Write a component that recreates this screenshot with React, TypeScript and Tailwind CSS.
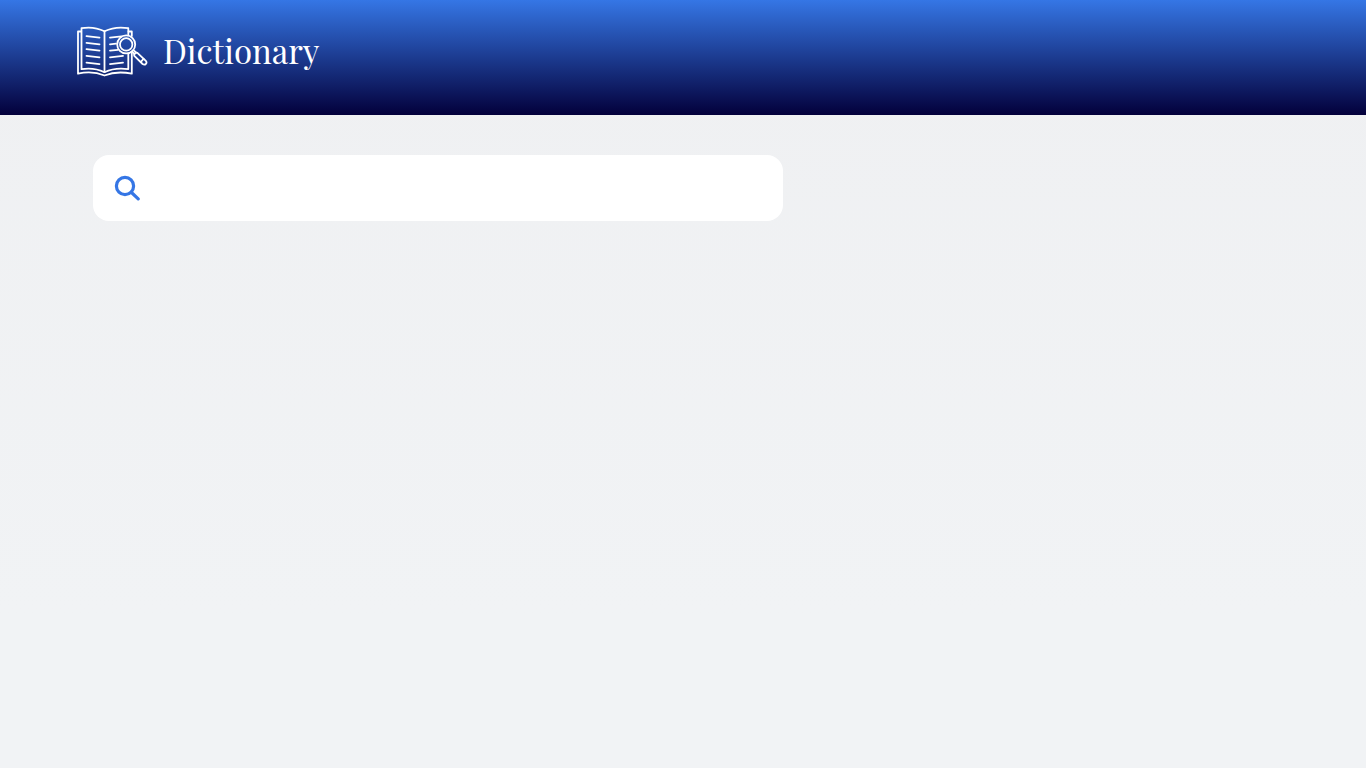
import { useState } from "react";

function BookLogo() {
  return (
    <svg
      aria-hidden="true"
      viewBox="76 26 72 51"
      className="h-[51px] w-[72px] shrink-0"
      fill="none"
      stroke="white"
      strokeWidth="1.8"
      strokeLinecap="round"
      strokeLinejoin="round"
    >
      <path d="M104.5 31.3C97 27.6 89.5 26.8 81.5 28.2V69.2C89.5 67.9 97 68.7 104.5 72.2C112 68.7 119.5 67.9 128.3 69.2V54M104.5 31.3C112 27.6 119.5 26.8 128.3 28.2V34.5" />
      <path d="M104.5 31.3V72.2" />
      <path d="M81 31.5H78V73.7C87 71.7 96 72 104.5 75.5C113 72 122 71.7 131.8 73.7V53M128.5 31.5H131.8V36" />
      <path d="M86.5 36.2L99.5 37.7M86.5 42.8L99.5 44.3M86.5 49.2L99.5 50.7M86.5 55.9L99.5 57.4M86.5 62.6L99.5 64.1" />
      <path d="M110 37.7L121.5 36.4M110 44.3L116 43.6M110 50.7L118 49.8M110 57.4L123 55.9M110 64.1L123 62.6" />
      <circle cx="126.2" cy="44.4" r="9" />
      <circle cx="126.2" cy="44.4" r="6.2" />
      <path d="M132 51.5L134.5 54.2M133.5 50.2L136.3 52.7" />
      <path d="M134.3 55.8C133.6 54.2 135.6 52 137.4 52.8L145.6 60.6C147.8 62.8 145.2 65.8 142.6 64Z" />
      <path d="M140.8 61.8L143.6 58.9" />
    </svg>
  );
}

function SearchIcon() {
  return (
    <svg
      aria-hidden="true"
      viewBox="0 0 26 26"
      className="size-[26px] shrink-0"
      fill="none"
      stroke="#3576e5"
      strokeWidth="3.2"
      strokeLinecap="round"
    >
      <circle cx="11" cy="11" r="8.6" />
      <path d="M17.5 17.5L24.2 23.9" />
    </svg>
  );
}

export default function App() {
  const [word, setWord] = useState("");

  return (
    <div className="min-h-screen bg-linear-to-b/srgb from-[#eff0f2] to-[#f1f3f5] to-80%">
      <header className="flex h-[115px] items-start bg-linear-to-b/srgb from-[#3576e5] to-[#03003b] px-[76px] pt-[26px]">
        <a href="#" className="flex items-start gap-[15px] text-white">
          <BookLogo />
          <h1 className="font-['Playfair_Display','Liberation_Serif',serif] text-[33px] leading-[48px]">
            Dictionary
          </h1>
        </a>
      </header>
      <main className="px-[93px] pt-10">
        <form role="search" onSubmit={(event) => event.preventDefault()} className="max-w-[690px]">
          <label className="flex h-[66px] items-center gap-4 rounded-2xl bg-white px-[21px]">
            <SearchIcon />
            <input
              type="text"
              aria-label="Search"
              value={word}
              onChange={(event) => setWord(event.target.value)}
              className="min-w-0 flex-1 bg-transparent font-['Liberation_Sans',sans-serif] text-lg text-gray-800 outline-none"
            />
          </label>
        </form>
      </main>
    </div>
  );
}
